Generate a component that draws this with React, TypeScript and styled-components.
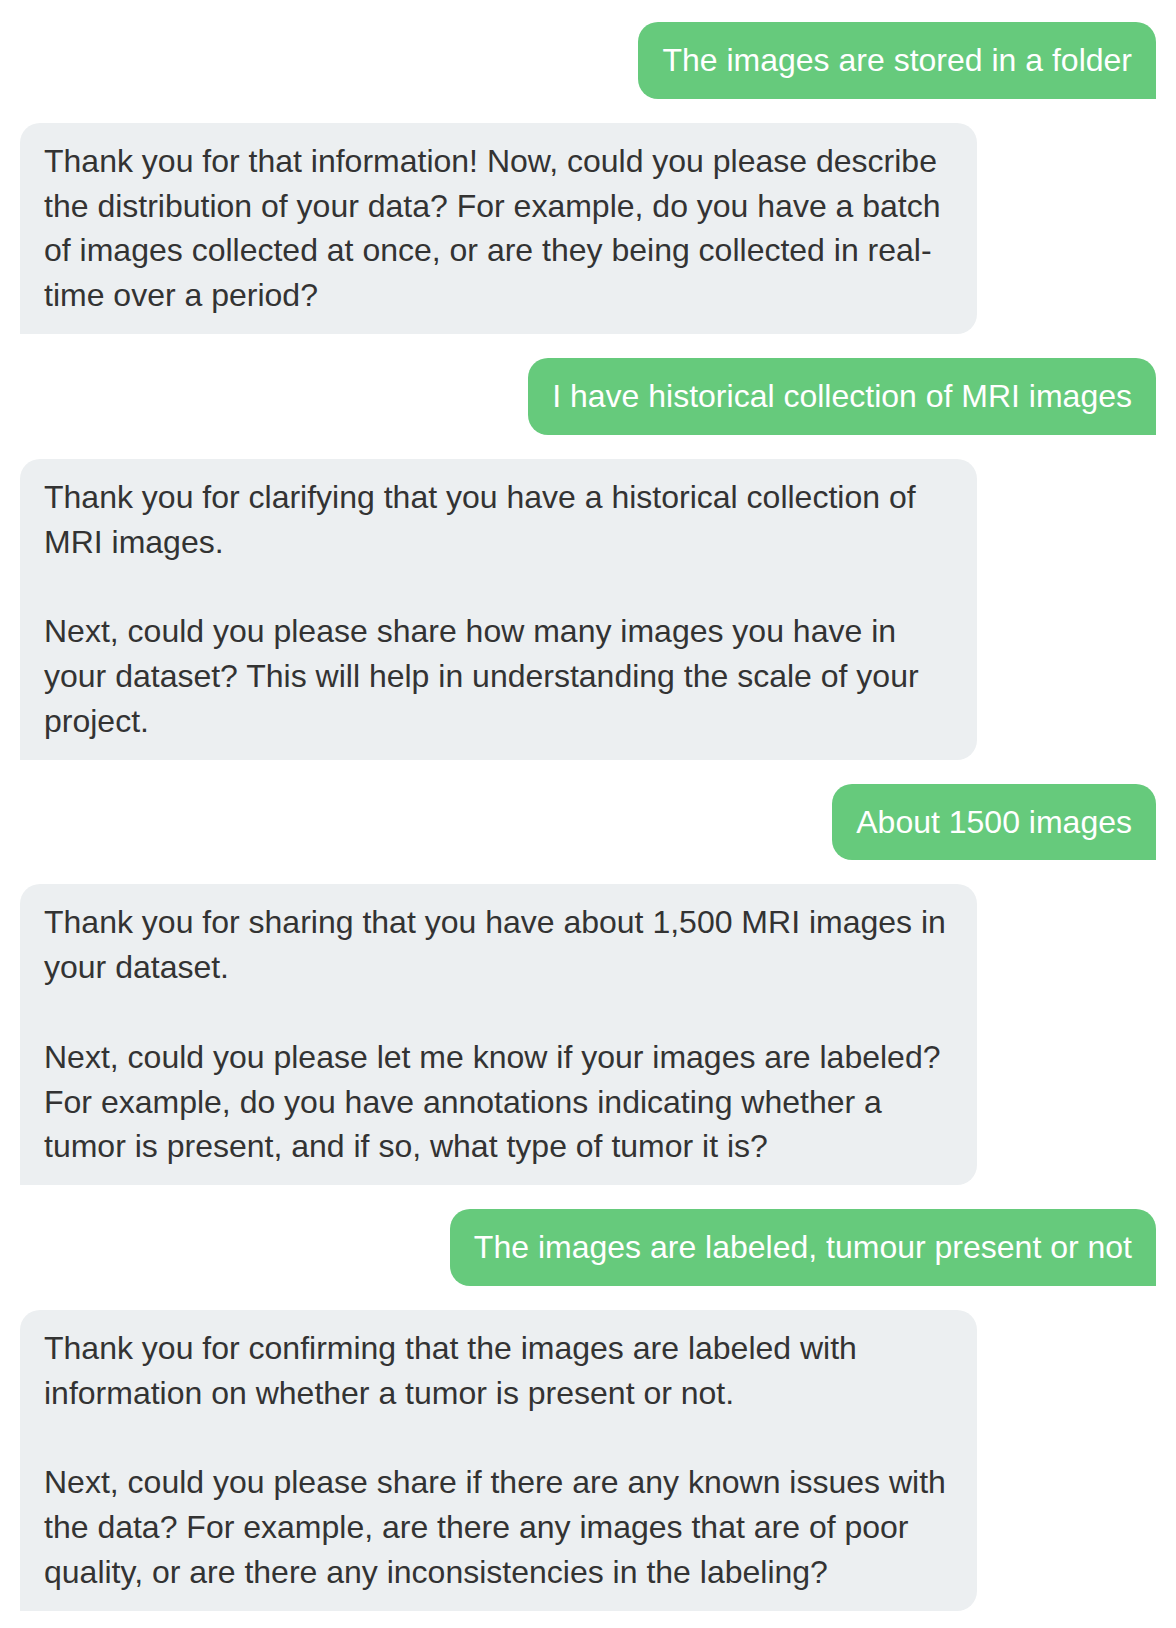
import React from 'react';
import styled, { createGlobalStyle } from 'styled-components';

const GlobalStyle = createGlobalStyle`
  html, body {
    margin: 0;
    padding: 0;
    background: #ffffff;
  }
  body {
    font-family: "Liberation Sans", Arial, Helvetica, sans-serif;
  }
`;

type Message = { from: 'user' | 'bot'; text: string };

const messages: Message[] = [
  { from: 'user', text: 'The images are stored in a folder' },
  {
    from: 'bot',
    text: 'Thank you for that information! Now, could you please describe the distribution of your data? For example, do you have a batch of images collected at once, or are they being collected in real-time over a period?',
  },
  { from: 'user', text: 'I have historical collection of MRI images' },
  {
    from: 'bot',
    text: 'Thank you for clarifying that you have a historical collection of MRI images.\n\nNext, could you please share how many images you have in your dataset? This will help in understanding the scale of your project.',
  },
  { from: 'user', text: 'About 1500 images' },
  {
    from: 'bot',
    text: 'Thank you for sharing that you have about 1,500 MRI images in your dataset.\n\nNext, could you please let me know if your images are labeled? For example, do you have annotations indicating whether a tumor is present, and if so, what type of tumor it is?',
  },
  { from: 'user', text: 'The images are labeled, tumour present or not' },
  {
    from: 'bot',
    text: 'Thank you for confirming that the images are labeled with information on whether a tumor is present or not.\n\nNext, could you please share if there are any known issues with the data? For example, are there any images that are of poor quality, or are there any inconsistencies in the labeling?',
  },
];

export default function App() {
  return (
    <>
      <GlobalStyle />
      <Thread>
        {messages.map((m, i) => (
          <Bubble key={i} $user={m.from === 'user'}>
            {m.text}
          </Bubble>
        ))}
      </Thread>
    </>
  );
}

const Thread = styled.div`
  display: flex;
  flex-direction: column;
  gap: 24px;
  padding: 22px 20px 18px;
`;

const Bubble = styled.div<{ $user: boolean }>`
  box-sizing: content-box;
  max-width: 80%;
  padding: 16px 24px;
  font-size: 32px;
  line-height: 1.4;
  white-space: pre-wrap;
  align-self: ${(p) => (p.$user ? 'flex-end' : 'flex-start')};
  background: ${(p) => (p.$user ? '#66ca7c' : '#eceff1')};
  color: ${(p) => (p.$user ? '#ffffff' : '#333333')};
  border-radius: ${(p) => (p.$user ? '20px 20px 0 20px' : '20px 20px 20px 0')};
`;
